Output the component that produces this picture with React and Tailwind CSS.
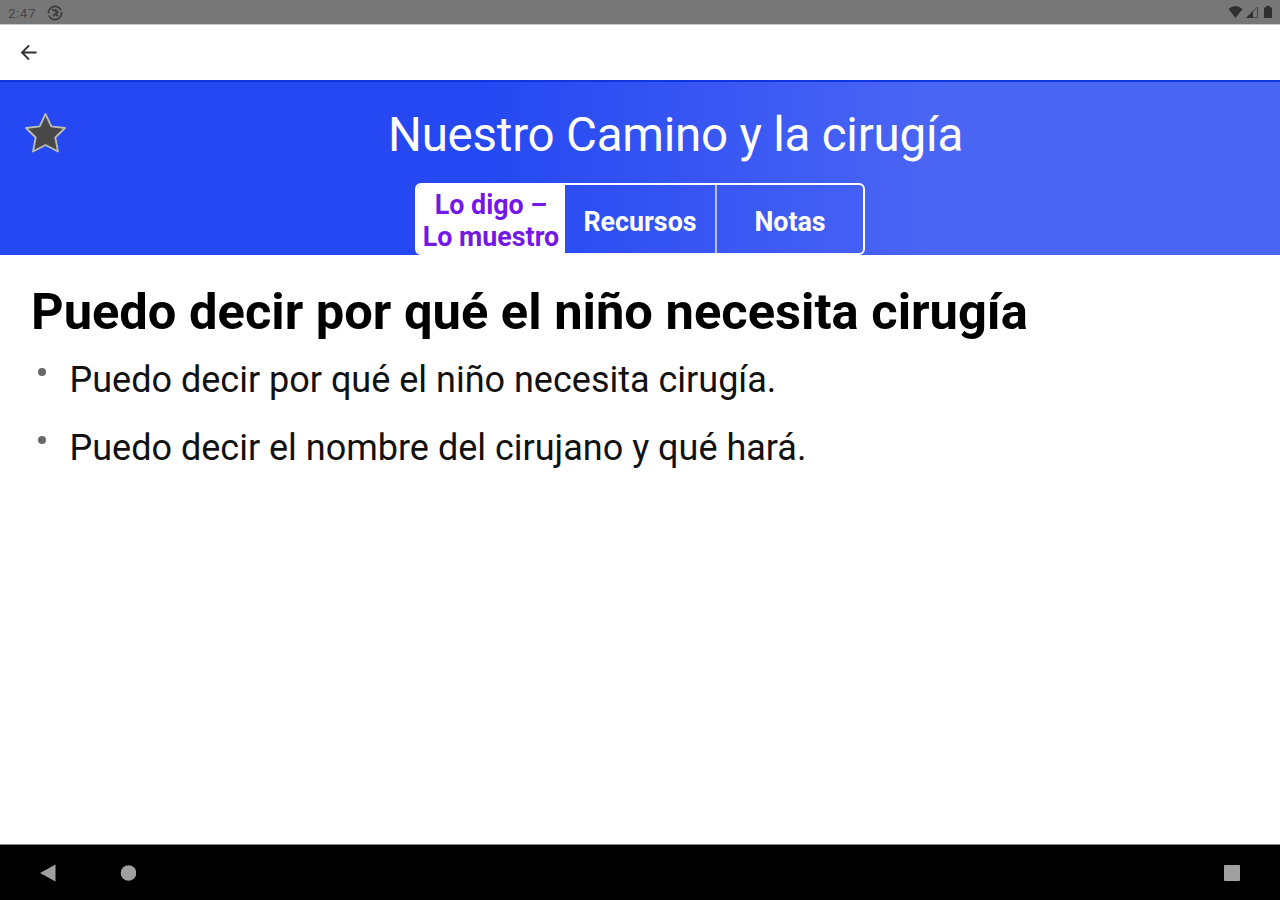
import React from "react";

function StatusBar() {
  return (
    <div className="flex h-6 shrink-0 items-center justify-between bg-[#777777] pl-2 pr-1 text-[#484848]">
      <div className="flex items-center gap-[11px] pt-px">
        <span className="w-7 whitespace-nowrap text-[13.500px] leading-5 tracking-[0.5px]">2:47</span>
        <svg width="16" height="16" viewBox="0 0 16 16" fill="none" stroke="#3c3c3c">
          <circle cx="8" cy="8" r="6.600" strokeWidth="1.7" strokeDasharray="18 2" />
          <path d="M5 4.500L10.500 7L6 11M8 4.500l3.500 3M8 8.500l3 2.500" strokeWidth="1.8" />
        </svg>
      </div>
      <svg width="48" height="16" viewBox="0 0 48 16" fill="#303030">
        <path d="M0.5 5Q7.5-1 14.5 5L7.5 14Z" />
        <path d="M19 13.5L29.500 3V13.500Z" fill="none" stroke="#444" strokeWidth="1" />
        <path d="M18 14L25 7V14Z" />
        <path d="M38 2h4v1.500h2V14h-8V3.500H38Z" />
      </svg>
    </div>
  );
}

function Header() {
  return (
    <header className="flex h-[175px] shrink-0 flex-col border-t-2 border-[#1236de] bg-[linear-gradient(90deg,#2548f2_0%,#2548f2_38%,#4c66f4_74%,#4c66f4_100%)] bg-origin-border text-white">
      <div className="flex h-[101px] items-center pl-[24px]">
        <svg className="shrink-0" width="42" height="42" viewBox="0 0 42 42">
          <path
            d="M21.500 2L27.300 14.300L41 16L31.300 25.500L34 39.500L21.500 33L9 39.500L11.700 25.500L2 16L15.700 14.300Z"
            fill="#484848"
            stroke="#bdbdb5"
            strokeWidth="1.8"
            strokeLinejoin="round"
          />
        </svg>
        <h1 className="ml-[322px] whitespace-nowrap pt-[5px] text-[47.500px] leading-[56px] tracking-[-0.23px]">
          Nuestro Camino y la cirugía
        </h1>
      </div>
      <nav className="mx-auto flex h-[72px] w-[450px] shrink-0 overflow-hidden rounded-md border-2 border-white text-[26.800px] font-bold leading-8">
        <button className="w-[148px] shrink-0 whitespace-nowrap bg-white pt-[4px] text-center text-[#7418e8]">
          Lo digo –<br />Lo muestro
        </button>
        <button className="w-[152px] shrink-0 border-r-2 border-[#b5c0fa] pt-[5px] text-center">Recursos</button>
        <button className="flex-1 pt-[5px] text-center">Notas</button>
      </nav>
    </header>
  );
}

function Item({ children }) {
  return (
    <li className="flex h-[68px]">
      <span className="ml-[38px] mt-[18px] size-2 shrink-0 rounded-full bg-[#696969]" />
      <span className="ml-[23.500px] whitespace-nowrap text-[36px] leading-[60px] text-[#111111]">{children}</span>
    </li>
  );
}

export default function App() {
  return (
    <div className="flex h-[900px] w-[1280px] flex-col overflow-hidden bg-white font-[Roboto,sans-serif]">
      <StatusBar />
      <div className="flex h-14 shrink-0 items-center border-t border-[#c8c8c8] pl-5">
        <svg width="17" height="17" viewBox="0 0 17 17" fill="none" stroke="#303030" strokeWidth="1.8">
          <path d="M16.500 8.500H2M9 1.500L2 8.500L9 15.500" />
        </svg>
      </div>
      <Header />
      <main className="flex-1">
        <h2 className="ml-[31px] mt-[27px] whitespace-nowrap text-[50.650px] font-bold leading-[60px] text-black">
          Puedo decir por qué el niño necesita cirugía
        </h2>
        <ul className="mt-[8px]">
          <Item>Puedo decir por qué el niño necesita cirugía.</Item>
          <Item>Puedo decir el nombre del cirujano y qué hará.</Item>
        </ul>
      </main>
      <footer className="flex h-14 shrink-0 items-center border-t border-[#888888] bg-black pl-10 pr-10">
        <svg width="96" height="18" viewBox="0 0 96 18" fill="#a0a0a0">
          <path d="M0 9L15.500 0.500V17.500Z" />
          <circle cx="88.500" cy="9" r="7.800" />
        </svg>
        <span className="ml-auto size-4 rounded-[1px] bg-[#a0a0a0]" />
      </footer>
    </div>
  );
}
